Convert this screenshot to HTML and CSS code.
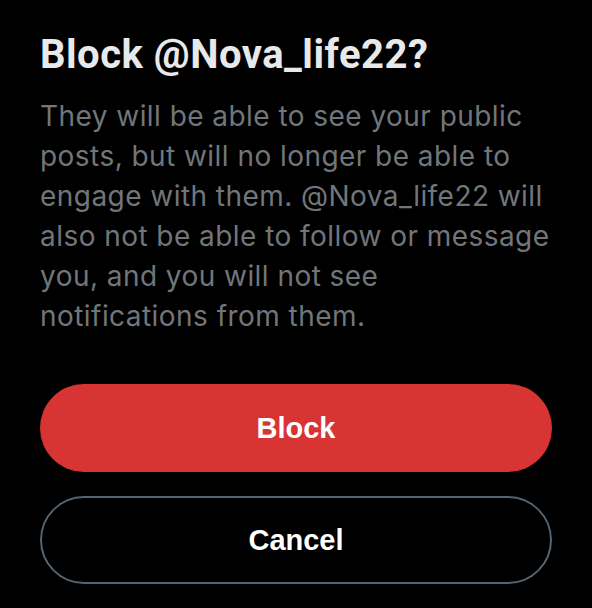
FILE: index.html
```html
<!DOCTYPE html>
<html>
<head>
<meta charset="utf-8">
<link rel="stylesheet" href="styles.css">
</head>
<body>
<div class="dialog">
  <h1 class="title">Block @Nova_life22?</h1>
  <p class="desc">They will be able to see your public posts, but will no longer be able to engage with them. @Nova_life22 will also not be able to follow or message you, and you will not see notifications from them.</p>
  <div class="actions">
    <button class="btn btn-block">Block</button>
    <button class="btn btn-cancel">Cancel</button>
  </div>
</div>
</body>
</html>
```
FILE: styles.css
```css
html, body {
  margin: 0;
  padding: 0;
  background: #000;
  width: 592px;
  height: 608px;
  overflow: hidden;
}
.dialog {
  padding: 31px 40px 0 40px;
  display: flex;
  flex-direction: column;
}
.title {
  margin: 0;
  font-family: Roboto, "Liberation Sans", sans-serif;
  font-weight: 700;
  font-size: 40px;
  line-height: 48px;
  letter-spacing: 0.5px;
  color: #e7e9ea;
}
.desc {
  margin: 17px 0 0 0;
  font-family: Inter, "Open Sans", sans-serif;
  font-size: 28px;
  line-height: 40px;
  letter-spacing: 0.45px;
  color: #71767b;
}
.actions {
  margin-top: 48px;
  display: flex;
  flex-direction: column;
  gap: 24px;
}
.btn {
  height: 88px;
  border-radius: 44px;
  font-family: "Liberation Sans", Arial, sans-serif;
  font-weight: 700;
  font-size: 29px;
  color: #fff;
  cursor: pointer;
}
.btn-block {
  background: #d93434;
  border: none;
}
.btn-cancel {
  background: transparent;
  border: 2px solid #536471;
}
```
